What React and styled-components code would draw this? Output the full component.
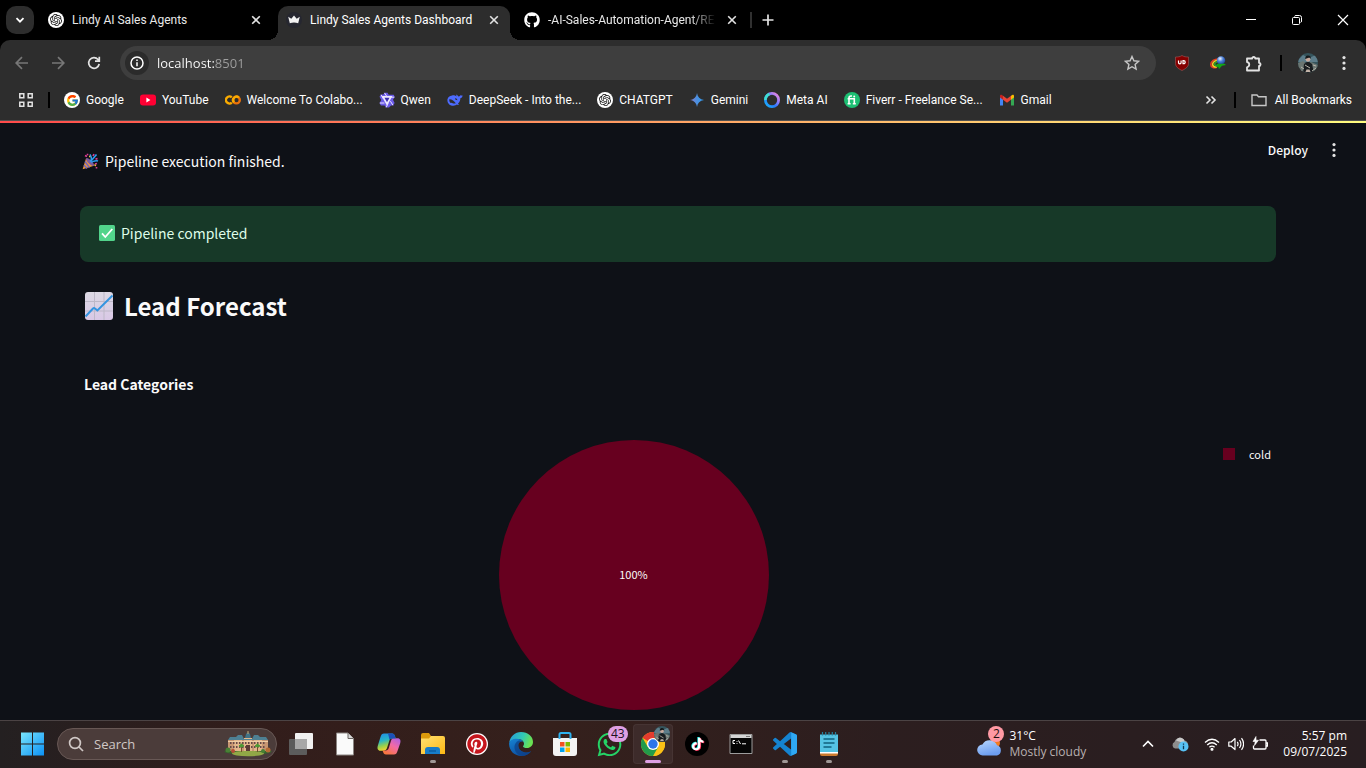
import React from "react";
import styled, { createGlobalStyle, css } from "styled-components";
import { FcGoogle } from "react-icons/fc";
import { FaGithub, FaTiktok, FaWhatsapp, FaPinterest } from "react-icons/fa";
import { SiOpenai } from "react-icons/si";

const uiFont = '"Open Sans", "Noto Sans", sans-serif';
const chromeFont = 'Roboto, "Open Sans", sans-serif';
const pageFont = '"Noto Sans CJK SC", "Noto Sans", sans-serif';

const GlobalStyle = createGlobalStyle`
  *, *::before, *::after { box-sizing: border-box; }
  body { margin: 0; background: #0e1117; }
  button, input { font: inherit; color: inherit; border: 0; padding: 0; margin: 0; background: none; }
  button { cursor: pointer; }
  svg { display: block; flex: none; }
`;

const Desktop = styled.div`
  display: flex;
  flex-direction: column;
  height: 100vh;
  overflow: hidden;
  font-family: ${uiFont};
  font-size: 12px;
  line-height: 16px;
  color: #fff;
`;

/* ---------- Browser chrome ---------- */

const TabStrip = styled.header`
  display: flex;
  align-items: flex-start;
  height: 40px;
  padding: 6px 0 0 6px;
  background: #000;
`;

const TabSearch = styled.button`
  display: grid;
  place-items: center;
  width: 28px;
  height: 28px;
  margin-right: 6px;
  border-radius: 10px;
  background: #2d2d2d;
`;

const Tabs = styled.nav`
  display: flex;
  gap: 6px;
  font-family: ${chromeFont};
`;

const Tab = styled.div`
  position: relative;
  display: flex;
  align-items: center;
  gap: 8px;
  width: 232px;
  height: 34px;
  padding: 0 8px 6px;
  color: #e8e8e8;
  ${(p) =>
    p.$active &&
    css`
      background: #2d2d2d;
      border-radius: 10px 10px 0 0;
      color: #fff;
      &::before,
      &::after {
        content: "";
        position: absolute;
        bottom: 0;
        width: 10px;
        height: 10px;
      }
      &::before {
        right: 100%;
        background: radial-gradient(circle at 0 0, transparent 10px, #2d2d2d 10px);
      }
      &::after {
        left: 100%;
        background: radial-gradient(circle at 100% 0, transparent 10px, #2d2d2d 10px);
      }
    `}
`;

const TabTitle = styled.button`
  flex: 1;
  min-width: 0;
  overflow: hidden;
  white-space: nowrap;
  text-align: left;
  ${(p) =>
    p.$fade &&
    css`
      mask-image: linear-gradient(to right, #000 calc(100% - 26px), transparent);
    `}
`;

const IconButton = styled.button`
  display: grid;
  place-items: center;
  flex: none;
  width: ${(p) => p.$w || 16}px;
  height: ${(p) => p.$h || 16}px;
  color: ${(p) => p.$color || "#e3e3e3"};
`;

const NewTab = styled.div`
  display: flex;
  align-items: center;
  gap: 8px;
  height: 28px;
  margin-left: 2px;
`;

const Divider = styled.span`
  flex: none;
  width: 2px;
  height: 16px;
  background: ${(p) => p.$color || "#000"};
`;

const DividerCell = styled.span`
  display: flex;
  justify-content: center;
  flex: none;
  width: ${(p) => p.$w}px;
`;

const WindowControls = styled.div`
  display: flex;
  margin-left: auto;
`;

const TopCorners = styled.div`
  background: #000;
`;

const Chrome = styled.div`
  background: #2d2d2d;
  border-radius: 10px 10px 0 0;
  border-bottom: 1px solid #505050;
`;

const Toolbar = styled.div`
  display: flex;
  align-items: center;
  height: 46px;
  padding: 0 4px;
`;

const AddressBar = styled.label`
  display: flex;
  align-items: center;
  flex: 1;
  height: 34px;
  margin: 0 8px;
  padding: 0 16px 0 5px;
  border-radius: 17px;
  background: #3e3e3e;
`;

const SiteInfo = styled.span`
  display: grid;
  place-items: center;
  width: 24px;
  height: 24px;
  margin-right: 8px;
  border-radius: 50%;
  background: #2b2b2b;
`;

const AddressInput = styled.input`
  flex: 1;
  min-width: 0;
  font-size: 13px;
  outline: none;
  background: linear-gradient(to right, #fff 58px, #a0a0a0 58px);
  background-clip: text;
  -webkit-text-fill-color: transparent;
`;

const Extensions = styled.div`
  display: flex;
  align-items: center;
`;

const Bookmarks = styled.nav`
  display: flex;
  align-items: center;
  height: 34px;
  padding: 0 14px 6px 18px;
  font-family: ${chromeFont};
`;

const BookmarkList = styled.div`
  display: flex;
  gap: 16px;
  flex: 1;
`;

const Bookmark = styled.a`
  display: flex;
  align-items: center;
  gap: ${(p) => p.$gap || 6}px;
  color: #fff;
  text-decoration: none;
  white-space: nowrap;
`;

const RoundLogo = styled.span`
  display: grid;
  place-items: center;
  flex: none;
  width: ${(p) => p.$size || 16}px;
  height: ${(p) => p.$size || 16}px;
  border-radius: 50%;
  background: ${(p) => p.$bg};
  color: ${(p) => p.$color};
`;

/* ---------- Dashboard page ---------- */

const Decoration = styled.div`
  flex: none;
  height: 2px;
  background: linear-gradient(to right, #ff4b4b, #fffd80);
`;

const Page = styled.main`
  position: relative;
  flex: 1;
  min-height: 0;
  overflow: hidden;
  padding: 25px 90px 0 80px;
  background: #0e1117;
  font-family: ${pageFont};
  color: #fafafa;
`;

const PageActions = styled.div`
  position: absolute;
  top: 16px;
  right: 24px;
  display: flex;
  align-items: center;
  gap: 18px;
  font-size: 12px;
  font-weight: 500;
  line-height: 22px;
`;

const StatusLine = styled.p`
  display: flex;
  align-items: center;
  gap: 6px;
  margin: 0;
  padding-left: 2px;
  font-size: 14px;
  line-height: 26px;
`;

const Alert = styled.div`
  display: flex;
  align-items: center;
  gap: 6px;
  margin-top: 32px;
  padding: 15px 19px 17px;
  border-radius: 8px;
  background: #173928;
  color: #dffde9;
  font-size: 14px;
  line-height: 24px;
`;

const Heading = styled.h2`
  display: flex;
  align-items: center;
  gap: 10px;
  margin: 28px 0 0;
  padding-left: 4px;
  font-size: 24px;
  font-weight: 700;
  line-height: 32px;
`;

const Chart = styled.figure`
  margin: 50px 0 0;
`;

const ChartTitle = styled.figcaption`
  padding-left: 4px;
  font-size: 14px;
  font-weight: 700;
  line-height: 24px;
`;

const ChartBody = styled.div`
  display: grid;
  grid-template-columns: 1fr 89px;
  margin-top: 44px;
`;

const Pie = styled.div`
  display: grid;
  place-items: center;
  justify-self: center;
  width: 270px;
  height: 270px;
  padding-bottom: 2px;
  border-radius: 50%;
  background: #67001f;
  font-size: 11px;
`;

const Legend = styled.div`
  display: flex;
  align-items: center;
  align-self: start;
  gap: 14px;
  padding: 6px 0 0 36px;
  font-size: 11px;
`;

const Swatch = styled.span`
  width: 12px;
  height: 12px;
  background: #67001f;
`;

/* ---------- Taskbar ---------- */

const Taskbar = styled.footer`
  display: flex;
  align-items: center;
  flex: none;
  height: 48px;
  padding: 0 19px 1px 10px;
  border-top: 1px solid #4b4344;
  background: linear-gradient(to right, #242021, #321d1b 18%, #35201c 40%, #2c1e1f 65%, #281e21);
`;

const TaskButton = styled.button`
  position: relative;
  display: grid;
  place-items: center;
  flex: none;
  width: 40px;
  height: 40px;
  margin: 0 2px;
  border-radius: 4px;
  ${(p) =>
    p.$active &&
    css`
      background: #3d2b2a;
      box-shadow: inset 0 0 0 1px #463433;
    `}
  ${(p) =>
    (p.$running || p.$active) &&
    css`
      &::after {
        content: "";
        position: absolute;
        bottom: 1px;
        left: 50%;
        width: ${p.$active ? 16 : 6}px;
        height: 3px;
        border-radius: 2px;
        background: ${p.$active ? "#dfa0e4" : "#a09896"};
        transform: translateX(-50%);
      }
    `}
`;

const SearchBox = styled.label`
  display: flex;
  align-items: center;
  flex: none;
  width: 220px;
  height: 32px;
  margin: 0 2px 0 3px;
  padding: 0 4px 0 10px;
  border: 1px solid #685855;
  border-radius: 16px;
  background: #4b3c3a;
  font-size: 13px;
  color: #d0c8c6;
`;

const SearchInput = styled.input`
  flex: 1;
  min-width: 0;
  margin-left: 10px;
  outline: none;
  &::placeholder {
    color: #d0c8c6;
    opacity: 1;
  }
`;

const Badge = styled.span`
  position: absolute;
  top: 2px;
  left: 19px;
  padding: 0 3px;
  border-radius: 8px;
  background: #dfa0e4;
  color: #201020;
  line-height: 16px;
`;

const AvatarBadge = styled.span`
  position: absolute;
  top: 2px;
  right: 3px;
`;

const Weather = styled.button`
  display: flex;
  align-items: center;
  gap: 6px;
  margin-left: auto;
  text-align: left;
`;

const WeatherArt = styled.span`
  position: relative;
  padding-top: 6px;
`;

const WeatherBadge = styled.span`
  position: absolute;
  top: -5px;
  right: -1px;
  width: 16px;
  border-radius: 50%;
  background: #ff99a4;
  color: #201010;
  text-align: center;
`;

const Muted = styled.span`
  display: block;
  color: #b8b0b0;
`;

const Tray = styled.div`
  display: flex;
  align-items: center;
  gap: 8px;
  margin-left: 50px;
`;

const SystemIcons = styled.div`
  display: flex;
  gap: 8px;
  margin-left: 4px;
`;

const Clock = styled.time`
  margin-left: 15px;
  text-align: right;
`;

const Line = styled.span`
  display: block;
`;

/* ---------- Icons ---------- */

const Stroke = ({ size = 16, w = 1.6, vb = 16, children }) => (
  <svg width={size} height={size} viewBox={`0 0 ${vb} ${vb}`} fill="none" stroke="currentColor" strokeWidth={w}>
    {children}
  </svg>
);

const CloseIcon = () => (
  <Stroke size={10} vb={10} w={1.6}><path d="M1.2 1.2l7.6 7.6M8.8 1.2L1.2 8.8" /></Stroke>
);

const Dots = () => (
  <svg width="4" height="16" viewBox="0 0 4 16" fill="currentColor">
    <circle cx="2" cy="2.6" r="1.6" /><circle cx="2" cy="8" r="1.6" /><circle cx="2" cy="13.4" r="1.6" />
  </svg>
);

const CrownIcon = () => (
  <svg width="16" height="16" viewBox="0 0 16 16">
    <circle cx="8" cy="8" r="8" fill="#262730" />
    <path d="M2.2 4.8l3.1 2L8 3.6l2.7 3.2 3.1-2-1.6 6.4q-4.2-1.2-8.4 0z" fill="#f2f2f2" />
  </svg>
);

const OpenAi = () => (
  <RoundLogo $bg="#fff" $color="#111"><SiOpenai size={12} /></RoundLogo>
);

const ColabIcon = () => (
  <svg width="16" height="16" viewBox="0 0 16 16" fill="none" strokeWidth="2.4">
    <path d="M6.8 5.4a3.5 3.5 0 1 0 0 5.2" stroke="#f9ab00" />
    <circle cx="11.4" cy="8" r="3.400" stroke="#e8710a" />
    <path d="M9 10.400a3.400 3.400 0 0 1 4.800-4.800" stroke="#f9ab00" />
  </svg>
);

const QwenIcon = () => (
  <svg width="16" height="16" viewBox="0 0 16 16">
    <path d="M5.500.7h3l1.200 2h5l1 2.400-1.700 2.600 1.600 3.400-1.500 2.300H12l-2 2.100H7l-1.400-2H1.900L.5 11l1.800-2.900L.5 4.800 2 2.600h2.500z" fill="#6b5be8" />
    <path d="M4 4.800h8L8 12z" fill="#3b2fb0" stroke="#eeeaff" strokeWidth="1.700" />
    <path d="M5.500.9l2.600 4M15.300 5.200h-4.600M13.900 13.200l-2.500-4M7.200 15.300l2-4M.8 11h4.600M2.100 2.800l2.200 4" stroke="#e6e1ff" />
  </svg>
);

const DeepSeekIcon = () => (
  <svg width="16" height="16" viewBox="0 0 16 16">
    <path d="M15.600 3.400c-.9.4-1.400.1-1.900-.4-.3 1-1.100 1.500-2.200 1.400-.5-.6-1.300-1-2-1.800-.5.7-.2 1.300.2 1.800-1.300-.6-2.600-1.200-4.500-1C2.400 3.600.3 5.800.4 8.400.6 11.700 3.500 14 6.500 13.800c1.500-.1 2.400-.5 3.300-1.200.8.4 1.700.5 2.300 0-.6-.3-.9-.7-1.100-1.200C13 9.700 13.400 7.700 13.300 6.200c1.400-.4 2.200-1.300 2.300-2.800z" fill="#4d6bfe" />
    <path d="M2.300 7.200c2.400-.2 5 1.700 6.500 4-2.200 1.300-3.900-1.100-5.100-.2-1.200-1-1.600-2.300-1.400-3.800zM8 6.300c1.200-.4 2.200.5 2.400 1.900L8.500 7.700" fill="#2d2d2d" />
  </svg>
);

const YouTubeIcon = () => (
  <svg width="16" height="16" viewBox="0 0 16 16">
    <rect y="2.400" width="16" height="11.200" rx="3" fill="#ff0033" /><path d="M6.400 5.600v4.800l4-2.400z" fill="#fff" />
  </svg>
);

const GeminiIcon = () => (
  <svg width="16" height="16" viewBox="0 0 16 16">
    <defs><linearGradient id="gem" x1="0" x2="1"><stop stopColor="#8b7bc8" /><stop offset=".5" stopColor="#4a8fe0" /><stop offset="1" stopColor="#2f9cf0" /></linearGradient></defs>
    <path d="M8 1c.6 4 2.800 6.300 7 7-4.200.7-6.400 3-7 7-.6-4-2.800-6.300-7-7 4.200-.7 6.400-3 7-7z" fill="url(#gem)" />
  </svg>
);

const MetaIcon = () => (
  <svg width="16" height="16" viewBox="0 0 16 16" fill="none">
    <defs><linearGradient id="meta" x1="0" y1="1" x2="1" y2="0"><stop stopColor="#18b8f8" /><stop offset=".4" stopColor="#2a78ff" /><stop offset=".65" stopColor="#8a7bff" /><stop offset="1" stopColor="#ff8ad8" /></linearGradient></defs>
    <circle cx="8" cy="8" r="6.600" stroke="url(#meta)" strokeWidth="2.800" />
    <path d="M1.400 8a6.600 6.600 0 0 1 4-6" stroke="#3fe0d0" strokeWidth="2.600" />
  </svg>
);

const FiverrIcon = () => (
  <svg width="16" height="16" viewBox="0 0 16 16" fill="none">
    <circle cx="8" cy="8" r="8" fill="#1dbf73" />
    <path d="M5 12V5.800Q5 4 7 4h1M3.600 6.800h6.700V12M3.600 11.800h3M8.800 11.800h3" stroke="#fff" strokeWidth="1.600" />
    <circle cx="10.200" cy="4.400" r="1" fill="#fff" />
  </svg>
);

const GmailIcon = () => (
  <svg width="16" height="16" viewBox="0 0 16 16">
    <path d="M1 4v9.500h3V6.500z" fill="#4285f4" /><path d="M12 6.500v7h3V4z" fill="#34a853" />
    <path d="M12 3.800l1.200-.8C14.200 2.300 15 3 15 4v1.400l-3 2.300z" fill="#fbbc04" />
    <path d="M1 5.400V4c0-1 1-1.700 1.900-1L4 3.800v3.900z" fill="#c5221f" /><path d="M4 3.800l4 3 4-3v3.900l-4 3-4-3z" fill="#ea4335" />
  </svg>
);

const UBlockIcon = () => (
  <svg width="16" height="16" viewBox="0 0 16 16">
    <path d="M8 .5c2 1.300 4 1.500 6.500 1.500v6.500c0 3-2.500 5-6.500 7-4-2-6.500-4-6.500-7V2C4 2 6 1.800 8 .5z" fill="#850000" stroke="#a35b5b" strokeWidth=".6" />
    <path d="M4.500 5.400v2.200a1.300 1.300 0 0 0 2.600 0V5.400M9 5.700h.7a1.500 1.500 0 0 1 0 3H9z" fill="none" stroke="#fff" strokeWidth="1.200" />
  </svg>
);

const DownloadManagerIcon = () => (
  <svg width="16" height="16" viewBox="0 0 16 16">
    <defs><radialGradient id="globe" cx=".4" cy=".3" r=".7"><stop stopColor="#eef6ff" /><stop offset=".5" stopColor="#4c80d8" /><stop offset="1" stopColor="#1b3f9a" /></radialGradient></defs>
    <path d="M9 4C4.500 3.500.8 6.500.8 9.500c0 2.500 2.700 3.700 5.700 3" fill="none" stroke="#e33b25" strokeWidth="1.600" />
    <path d="M9 5.300C5.500 5 2.600 7.200 2.600 9.300c0 2 2 3 4.400 2.400" fill="none" stroke="#f6cf21" strokeWidth="1.600" />
    <path d="M9 6.500C6.500 6.500 4.500 8 4.600 9.300c.1 1.200 1.400 1.700 3.400 1.400" fill="none" stroke="#2ba12b" strokeWidth="1.600" />
    <circle cx="11" cy="5.400" r="4.200" fill="url(#globe)" />
    <path d="M7 8.700h7.500L16 10l-4 .8-3 3.200L8.300 12l-2.800-.5z" fill="#14a514" />
  </svg>
);

const PuzzleIcon = () => (
  <Stroke size={18} vb={18} w={1.8}>
    <path d="M2 3.500h5.200V2.800q1.500-1.600 3 0v.7H14v4.300h.7q1.600 1.600 0 3.200H14v4.500H2v-3.200c3-.8 3-4.600 0-5.300z" strokeLinejoin="round" />
  </Stroke>
);

const Avatar = ({ size = 20 }) => (
  <svg width={size} height={size} viewBox="0 0 20 20">
    <defs><clipPath id={`av${size}`}><circle cx="10" cy="10" r="10" /></clipPath></defs>
    <g clipPath={`url(#av${size})`}>
      <rect width="20" height="20" fill="#35545c" />
      <path d="M0 7L5 2l6 3 9-4v8H0z" fill="#5d7d8a" /><path d="M0 10l5-2 4 3 4-2 7 3v8H0z" fill="#6b7672" />
      <path d="M5 20l1-9 3-2h2l3 2 2 9z" fill="#191d20" />
      <path d="M7 12l5 3M3 14l3 2M14 18l4-3M1 17l3 1M15 12l3 1" stroke="#b7b5aa" />
      <circle cx="10" cy="6.300" r="2.400" fill="#c9a99c" /><path d="M7.200 6q0-3.500 2.800-3.400 3 0 2.800 3.200l-1.500-1.200z" fill="#15191b" />
      <path d="M8.500 16.500h3l1 2.500h-5z" fill="#c4b4a8" />
    </g>
  </svg>
);

const PartyEmoji = () => (
  <svg width="17" height="17" viewBox="0 0 17 17" fill="none">
    <path d="M.6 16.200L4 5.500q5 1.800 8 7.300z" fill="#e9973c" />
    <path d="M3 8.500l4.500 6M2 12l3 3.500" stroke="#7567bb" strokeWidth="1.500" />
    <ellipse cx="8" cy="9" rx="1.800" ry="5.200" transform="rotate(-45 8 9)" fill="#7b5a9e" />
    <path d="M8 8.500C10 7 9.500 4 8 1.300M9 9c2 .5 3.500-2.500 7-1" stroke="#2d9bf0" strokeWidth="1.500" />
    <path d="M9 8l5.500-6.500" stroke="#2d9bf0" strokeWidth="1.700" />
    <path d="M3 2.500l2 1M12 1l-1 2M15.500 5.500l-2 .8M15 10.500l-2 .6M5.500.8v1.400M14.500 14v1.500" stroke="#dd3d90" strokeWidth="1.600" />
    <path d="M7 3.500h1.400M12.500 11.500l1.300 1.400" stroke="#f5be3c" strokeWidth="1.400" />
  </svg>
);

const CheckEmoji = () => (
  <svg width="16" height="16" viewBox="0 0 16 16">
    <rect width="16" height="16" rx="1.500" fill="#52d48b" /><path d="M3 8.300L6.300 12 13.300 4" fill="none" stroke="#fff" strokeWidth="1.800" />
  </svg>
);

const ChartEmoji = () => (
  <svg width="30" height="28" viewBox="0 0 30 28">
    <defs><linearGradient id="paper" x2="0" y2="1"><stop stopColor="#dcd9e4" /><stop offset="1" stopColor="#d9c8e6" /></linearGradient></defs>
    <rect x="1" width="28" height="28" rx="3" fill="url(#paper)" />
    <path d="M10.500 0v28M20 0v28M1 9.500h28M1 19h28" stroke="#bdb8c8" />
    <path d="M1.500 24.500l7.500-8q1-.9 2 0l2.400 2L28.500 3.500" fill="none" stroke="#3494e0" strokeWidth="2" />
  </svg>
);

const WindowsIcon = () => (
  <svg width="24" height="24" viewBox="0 0 24 24">
    <defs><linearGradient id="win" gradientUnits="userSpaceOnUse" x1="0" y1="0" x2="24" y2="24"><stop stopColor="#7ce8fc" /><stop offset="1" stopColor="#0a90f5" /></linearGradient></defs>
    <path d="M1 .5h11v11H1zM13 .5h11v11H13zM1 12.500h11v11H1zM13 12.500h11v11H13z" fill="url(#win)" />
  </svg>
);

const PalaceArt = () => (
  <svg width="48" height="26" viewBox="0 0 48 26">
    <ellipse cx="24" cy="20.500" rx="23.500" ry="3.300" fill="#36642d" /><ellipse cx="24" cy="22.500" rx="16" ry="2.800" fill="#91a846" />
    <path d="M4 9h40v11H4z" fill="#c79672" /><path d="M10 8h8v12h-8zM30 8h8v12h-8zM20 7h8v13h-8z" fill="#e2b78c" />
    <path d="M4 9l2-3h6l2-2h4l2 4h8l2-4h4l2 2h6l2 3z" fill="#4e8093" />
    <path d="M21 7l1-4 2-2 2 2 1 4z" fill="#417387" /><path d="M24 0v3" stroke="#c9a66d" />
    <path d="M6 12h36M6 16h36" stroke="#674b48" strokeWidth="2" strokeDasharray="1.500 1.500" />
    <path d="M22 14h4v6h-4z" fill="#5c3b35" /><path d="M4 10.500h40" stroke="#efcea5" />
    <path d="M17.500 13v8M33.500 13v8" stroke="#72502d" /><path d="M15 15l2.500-2 2.500 2-2.500 1zM31 15l2.500-2 2.500 2-2.500 1z" fill="#4d9b35" stroke="#4d9b35" />
    <circle cx="4" cy="19" r="2.500" fill="#498135" /><circle cx="44" cy="19" r="2.500" fill="#b56c35" /><circle cx="9" cy="20" r="2" fill="#b54e36" /><circle cx="39" cy="20" r="2" fill="#498135" />
  </svg>
);

const TaskViewIcon = () => (
  <svg width="24" height="24" viewBox="0 0 24 24">
    <rect x="6" y="1" width="18" height="16" rx="1" fill="#f1f1f1" /><rect y="7" width="18" height="16" rx="1" fill="#5c5c5c" /><path d="M6 7h12v10H6z" fill="#a8a8a8" />
  </svg>
);

const FileIcon = () => (
  <svg width="18" height="24" viewBox="0 0 18 24"><path d="M.5 1H12l5.500 5.500V23H.5z" fill="#fafafa" stroke="#8b8582" /><path d="M12 1v5.500h5.500" fill="#d8d8d8" stroke="#6b6663" /></svg>
);

const CopilotIcon = () => (
  <svg width="24" height="24" viewBox="0 0 24 24">
    <defs>
      <linearGradient id="cp1" x2=".3" y2="1"><stop stopColor="#2189e8" /><stop offset=".45" stopColor="#27b5c8" /><stop offset=".75" stopColor="#9ad04b" /><stop offset="1" stopColor="#f4d331" /></linearGradient>
      <linearGradient id="cp2" x1="1" x2=".3" y2="1"><stop stopColor="#a55ee8" /><stop offset=".5" stopColor="#f26aa6" /><stop offset="1" stopColor="#f9763f" /></linearGradient>
    </defs>
    <path d="M7 1.500h8c1.800 0 2.500 1.300 3 2.800l.7 2.200H15c-1.500 0-2.200.8-2.700 2.200L10 16c-.7 2-1.700 2.700-3.500 2.700H3.500C.7 18.700 0 16.300.8 13.700L3.500 5c.7-2.400 1.700-3.500 3.500-3.500z" fill="url(#cp1)" />
    <path d="M17 22.500H9c-1.800 0-2.500-1.300-3-2.800l-.4-1.300h3.200c1.700 0 2.500-.9 3-2.400L14 8.800c.6-1.900 1.500-2.500 3.200-2.500h3.300c2.800 0 3.500 2.400 2.700 5L20.500 19c-.7 2.400-1.700 3.500-3.500 3.500z" fill="url(#cp2)" />
    <path d="M11 1.500h4c1.800 0 2.500 1.300 3 2.800l.7 2.200H15c-1 0-2 .5-2.400 1.500z" fill="#1c50b8" />
  </svg>
);

const FolderApp = () => (
  <svg width="24" height="24" viewBox="0 0 24 24">
    <defs><linearGradient id="fold" x2="1" y2="1"><stop stopColor="#ffe174" /><stop offset="1" stopColor="#fdb813" /></linearGradient></defs>
    <path d="M0 3q0-2 2-2h6l2 3v4H0z" fill="#dc9a0c" /><path d="M0 6.500h8l2-2.500h12q2 0 2 2v16H0z" fill="url(#fold)" />
    <path d="M4 22v-4q0-3 3-3h9q3 0 3 3v4z" fill="#177cc8" /><path d="M8 19h7" stroke="#0b5ca0" strokeWidth="1.500" />
  </svg>
);

const EdgeIcon = () => (
  <svg width="24" height="24" viewBox="0 0 24 24">
    <defs>
      <linearGradient id="ed1" x2="1" y2=".3"><stop stopColor="#2598dc" /><stop offset=".6" stopColor="#31c9b5" /><stop offset="1" stopColor="#6ae153" /></linearGradient>
      <linearGradient id="ed2" x2=".5" y2="1"><stop stopColor="#1684d3" /><stop offset="1" stopColor="#0d4fa0" /></linearGradient>
    </defs>
    <path d="M.3 10.500C1.200 4.500 6 0 12 0c7 0 12 4.500 12 10 0 3.500-2.700 6-6 6-2.500 0-4-.8-4-1.600 0-.7 1-1 1-2.700 0-2.500-2.400-4.800-6-4.800C5 6.900 1.800 8.500.3 10.500z" fill="url(#ed1)" />
    <path d="M.1 12C0 8.500 4 6.800 7.600 6.800c3 0 5.500 1.300 6.700 3-1-.7-5-.6-5 3.700 0 4.500 4.300 7 8.500 7 2 0 3.500-.8 4.200-1.200C20 22.500 16 24 12.500 24 5.500 24 .2 19 .1 12z" fill="url(#ed2)" />
    <path d="M10 8.500c-3.500 1.400-5 4.500-4.400 8 .6 3.800 3.800 7 7.400 7.400 4 .2 7.700-2 9-4.600-1.500.9-3 1.200-4.700 1.200-4.500 0-8-3.300-8-7 0-2.200 1.300-3.800 3.500-4.200-.8-.6-1.800-.9-2.800-.8z" fill="#0d3f84" opacity=".7" />
  </svg>
);

const StoreIcon = () => (
  <svg width="24" height="24" viewBox="0 0 24 24">
    <path d="M0 6h24v15q0 3-3 3H3q-3 0-3-3z" fill="#f3f3f3" /><path d="M6.500 7V2.500Q6.500 1 8 1h8q1.500 0 1.500 1.500V7" fill="none" stroke="#2db2f0" strokeWidth="2" />
    <path d="M7 10h4.500v4.500H7z" fill="#f25022" /><path d="M12.500 10H17v4.500h-4.500z" fill="#7fba00" /><path d="M7 15.500h4.500V20H7z" fill="#00a4ef" /><path d="M12.500 15.500H17V20h-4.500z" fill="#ffb900" />
  </svg>
);

const ChromeIcon = () => (
  <svg width="24" height="24" viewBox="0 0 24 24">
    <circle cx="12" cy="12" r="12" fill="#fbc116" />
    <path d="M12 12L1.600 6A12 12 0 0 1 22.400 6z" fill="#e33b2e" /><path d="M12 6h10.400a12 12 0 0 1-10.400 18l5.200-9z" fill="#fbc116" />
    <path d="M1.600 6A12 12 0 0 0 12 24l5.200-9-10.400 0z" fill="#229b4a" />
    <circle cx="12" cy="12" r="6" fill="#fff" /><circle cx="12" cy="12" r="4.700" fill="#2a75ea" />
  </svg>
);

const TikTokIcon = () => (
  <svg width="24" height="24" viewBox="0 0 24 24">
    <circle cx="12" cy="12" r="12" fill="#000" />
    <g transform="translate(5.500 5)"><FaTiktok size={13} color="#25f4ee" /></g>
    <g transform="translate(7 6)"><FaTiktok size={13} color="#fe2c55" /></g>
    <g transform="translate(6.200 5.500)"><FaTiktok size={13} color="#fff" /></g>
  </svg>
);

const TerminalIcon = () => (
  <svg width="24" height="20" viewBox="0 0 24 20">
    <path d="M1 .5h22v19H1z" fill="#050505" stroke="#9c9c9c" /><path d="M1.500 1h21v3h-21z" fill="#d4d4d4" />
    <path d="M17 2.500h4" stroke="#777" /><path d="M6 6.500H4v3h2M8 7v.8M8 9v.8M9.500 6.500l2 3.500M13 9.800h4" fill="none" stroke="#fff" />
  </svg>
);

const VsCodeIcon = () => (
  <svg width="24" height="24" viewBox="0 0 24 24">
    <path d="M23.150 2.587L18.210.210a1.494 1.494 0 0 0-1.705.290l-9.460 8.630-4.120-3.128a.999.999 0 0 0-1.276.057L.327 7.261A1 1 0 0 0 .326 8.740L3.899 12 .326 15.260a1 1 0 0 0 .001 1.479L1.650 17.940a.999.999 0 0 0 1.276.057l4.120-3.128 9.460 8.630a1.492 1.492 0 0 0 1.704.290l4.942-2.377A1.500 1.500 0 0 0 24 20.060V3.939a1.500 1.500 0 0 0-.850-1.352zm-5.146 14.861L10.826 12l7.178-5.448v10.896z" fill="#1583d0" />
    <path d="M18.200.200l4.950 2.387q.85.400.85 1.352V20.060q0 .950-.850 1.352L18.200 23.800z" fill="#2fa8f3" />
  </svg>
);

const NotepadIcon = () => (
  <svg width="20" height="24" viewBox="0 0 20 24">
    <path d="M1 3h18v19q0 2-2 2H3q-2 0-2-2z" fill="#cb7a2f" /><path d="M1 19h18v2.500H1z" fill="#fff" /><path d="M1 2.500h18V20H1z" fill="#55c3e3" />
    <path d="M3.500 0v3.500M6.700 0v3.500M10 0v3.500M13.300 0v3.500M16.500 0v3.500" stroke="#25829e" strokeWidth="1.200" />
    <path d="M4.500 7h11M4.500 11h11M4.500 15h8" stroke="#11617d" strokeWidth="1.700" />
  </svg>
);

const CloudIcon = () => (
  <svg width="26" height="20" viewBox="0 0 26 20">
    <defs><linearGradient id="cloud" x2=".4" y2="1"><stop stopColor="#b9d8ff" /><stop offset="1" stopColor="#6c9df0" /></linearGradient></defs>
    <circle cx="18" cy="6" r="5" fill="#f37b21" /><path d="M6 18.500a5.500 5.500 0 0 1-.6-11A8 8 0 0 1 20 8.300a5.300 5.300 0 0 1 0 10.200z" fill="url(#cloud)" />
  </svg>
);

const OneDriveIcon = () => (
  <svg width="18" height="16" viewBox="0 0 18 16">
    <path d="M4 12.500A3.500 3.500 0 0 1 3.500 6 5.500 5.500 0 0 1 13.500 4.500Q17 5 17 9v3.500z" fill="#8d8d8d" /><path d="M5 4.500Q8-1 13 3.500l1 4z" fill="#c9c9c9" />
    <circle cx="12.500" cy="10.500" r="5" fill="#58c2f5" /><path d="M12.500 9.800v3.400M12.500 7.500v1.300" stroke="#0d3954" strokeWidth="1.300" />
  </svg>
);

const WifiIcon = () => (
  <Stroke w={1.3}><path d="M1 6.500q7-6.500 14 0M3.200 9q4.800-4.400 9.600 0M5.400 11.300q2.600-2.400 5.200 0" /><circle cx="8" cy="13.200" r=".9" fill="currentColor" /></Stroke>
);
const SoundIcon = () => (
  <Stroke w={1.2}><path d="M.8 6v4.200h2.400L7 13.500v-11L3.200 6zM9.300 5.800q1.500 2.200 0 4.400M11.500 4q2.800 4 0 8M13.500 2.200q4.200 5.800 0 11.600" strokeLinejoin="round" /></Stroke>
);
const BatteryIcon = () => (
  <Stroke w={1.3}><path d="M7.500 4H13q1 0 1 1v7q0 1-1 1H2.500q-1 0-1-1V9.500M14.500 7h1v3h-1" /><path d="M4 .5L1 5.500h2.200L2.500 9.500l4-5.300H4z" fill="currentColor" strokeWidth=".6" /></Stroke>
);

/* ---------- Data ---------- */

const tabs = [
  { title: "Lindy AI Sales Agents", icon: <OpenAi /> },
  { title: "Lindy Sales Agents Dashboard", icon: <CrownIcon />, active: true },
  { title: "-AI-Sales-Automation-Agent/RE", icon: <FaGithub size={16} color="#fff" />, fade: true },
];

const bookmarks = [
  ["Google", <RoundLogo $bg="#fff"><FcGoogle size={13} /></RoundLogo>],
  ["YouTube", <YouTubeIcon />],
  ["Welcome To Colabo...", <ColabIcon />],
  ["Qwen", <QwenIcon />],
  ["DeepSeek - Into the...", <DeepSeekIcon />],
  ["CHATGPT", <OpenAi />],
  ["Gemini", <GeminiIcon />],
  ["Meta AI", <MetaIcon />],
  ["Fiverr - Freelance Se...", <FiverrIcon />],
  ["Gmail", <GmailIcon />],
];

const apps = [
  { name: "Task view", icon: <TaskViewIcon /> },
  { name: "Document", icon: <FileIcon /> },
  { name: "Copilot", icon: <CopilotIcon /> },
  { name: "File Explorer", icon: <FolderApp />, running: true },
  { name: "Pinterest", icon: <RoundLogo $size={22} $bg="#fff" $color="#c5161d"><FaPinterest size={20} /></RoundLogo> },
  { name: "Edge", icon: <EdgeIcon /> },
  { name: "Store", icon: <StoreIcon /> },
  { name: "WhatsApp", icon: <FaWhatsapp size={27} color="#25d366" />, badge: "43" },
  { name: "Chrome", icon: <ChromeIcon />, active: true },
  { name: "TikTok", icon: <TikTokIcon /> },
  { name: "Terminal", icon: <TerminalIcon /> },
  { name: "VS Code", icon: <VsCodeIcon />, running: true },
  { name: "Notepad", icon: <NotepadIcon />, running: true },
];

export default function App() {
  return (
    <Desktop>
      <GlobalStyle />
      <TabStrip>
        <TabSearch aria-label="Search tabs"><Stroke size={10} vb={10} w={1.8}><path d="M1.500 3.200L5 6.700l3.500-3.500" /></Stroke></TabSearch>
        <Tabs>
          {tabs.map((t) => (
            <Tab key={t.title} $active={t.active}>
              {t.icon}
              <TabTitle $fade={t.fade}>{t.title}</TabTitle>
              <IconButton aria-label="Close tab"><CloseIcon /></IconButton>
            </Tab>
          ))}
        </Tabs>
        <NewTab>
          <Divider $color="#303030" />
          <IconButton aria-label="New tab"><Stroke size={12} vb={12} w={1.7}><path d="M6 .5v11M.5 6h11" /></Stroke></IconButton>
        </NewTab>
        <WindowControls>
          <IconButton $w={46} $h={28} $color="#fff" aria-label="Minimize"><Stroke size={10} vb={10} w={1}><path d="M0 4.500h10" /></Stroke></IconButton>
          <IconButton $w={46} $h={28} $color="#fff" aria-label="Restore"><Stroke size={10} vb={10} w={1}><rect x=".5" y="2.500" width="7" height="7" rx="1" /><path d="M2.500 1.500Q2.700.5 4 .5h3.500q2 0 2 2V6q0 1.300-1 1.500" /></Stroke></IconButton>
          <IconButton $w={46} $h={28} $color="#fff" aria-label="Close"><Stroke size={12} vb={12} w={1.2}><path d="M1 1l10 10M11 1L1 11" /></Stroke></IconButton>
        </WindowControls>
      </TabStrip>

      <TopCorners>
        <Chrome>
          <Toolbar>
            <IconButton $w={36} $color="#777" aria-label="Back"><Stroke w={1.7}><path d="M14 8H2.500M8 2.200L2.200 8 8 13.800" /></Stroke></IconButton>
            <IconButton $w={36} $color="#777" aria-label="Forward"><Stroke w={1.7}><path d="M2 8h11.500M8 2.200L13.800 8 8 13.800" /></Stroke></IconButton>
            <IconButton $w={36} aria-label="Reload"><Stroke w={1.7}><path d="M13.200 9A5.300 5.300 0 1 1 12 4.500L13.300 6M13.300 1.800V6.200H9" /></Stroke></IconButton>
            <AddressBar>
              <SiteInfo><Stroke size={14} vb={14} w={1.5}><circle cx="7" cy="7" r="6" /><path d="M7 6.300v4M7 3.500V5" /></Stroke></SiteInfo>
              <AddressInput aria-label="Address" defaultValue="localhost:8501" />
              <Stroke w={1.4}><path d="M8 1.500l1.900 4.300 4.700.5-3.500 3.100 1 4.700L8 11.700l-4.100 2.400 1-4.700L1.400 6.300l4.700-.5z" stroke="#c7c7c7" /></Stroke>
            </AddressBar>
            <Extensions>
              <IconButton $w={36} aria-label="Ad blocker"><UBlockIcon /></IconButton>
              <IconButton $w={36} aria-label="Downloads"><DownloadManagerIcon /></IconButton>
              <IconButton $w={36} aria-label="Extensions"><PuzzleIcon /></IconButton>
              <DividerCell $w={18}><Divider /></DividerCell>
              <IconButton $w={36} $h={20} aria-label="Profile"><Avatar /></IconButton>
              <IconButton $w={36} aria-label="Menu"><Dots /></IconButton>
            </Extensions>
          </Toolbar>
          <Bookmarks>
            <IconButton aria-label="Apps"><Stroke size={14} vb={14} w={1.5}><path d="M.8.8h4v4h-4zM9.200.8h4v4h-4zM.8 9.200h4v4h-4zM9.200 9.200h4v4h-4z" /></Stroke></IconButton>
            <DividerCell $w={30}><Divider /></DividerCell>
            <BookmarkList>
              {bookmarks.map(([name, icon]) => (
                <Bookmark key={name} href="#">{icon}{name}</Bookmark>
              ))}
            </BookmarkList>
            <IconButton aria-label="More bookmarks"><Stroke size={12} vb={12} w={1.6}><path d="M1.500 2.500L5 6 1.500 9.500M6.500 2.500L10 6 6.500 9.500" /></Stroke></IconButton>
            <DividerCell $w={32}><Divider /></DividerCell>
            <Bookmark href="#" $gap={8}><Stroke w={1.4}><path d="M1 3h5l1.500 1.700H15v8.800H1z" stroke="#c7c7c7" /></Stroke>All Bookmarks</Bookmark>
          </Bookmarks>
        </Chrome>
      </TopCorners>

      <Decoration />
      <Page>
        <PageActions>
          <button>Deploy</button>
          <IconButton aria-label="Page menu"><Dots /></IconButton>
        </PageActions>
        <StatusLine><PartyEmoji />Pipeline execution finished.</StatusLine>
        <Alert role="status"><CheckEmoji />Pipeline completed</Alert>
        <Heading><ChartEmoji />Lead Forecast</Heading>
        <Chart>
          <ChartTitle>Lead Categories</ChartTitle>
          <ChartBody>
            <Pie>100%</Pie>
            <Legend><Swatch />cold</Legend>
          </ChartBody>
        </Chart>
      </Page>

      <Taskbar>
        <TaskButton aria-label="Start"><WindowsIcon /></TaskButton>
        <SearchBox>
          <Stroke w={1.7}><circle cx="7" cy="7" r="5.400" /><path d="M11 11l4 4" /></Stroke>
          <SearchInput placeholder="Search" aria-label="Search" />
          <PalaceArt />
        </SearchBox>
        {apps.map((a) => (
          <TaskButton key={a.name} aria-label={a.name} $active={a.active} $running={a.running}>
            {a.icon}
            {a.badge && <Badge>{a.badge}</Badge>}
            {a.active && <AvatarBadge><Avatar size={16} /></AvatarBadge>}
          </TaskButton>
        ))}
        <Weather>
          <WeatherArt><CloudIcon /><WeatherBadge>2</WeatherBadge></WeatherArt>
          <span>31°C<Muted>Mostly cloudy</Muted></span>
        </Weather>
        <Tray>
          <IconButton $w={24} $color="#fff" aria-label="Hidden icons"><Stroke size={12} vb={12} w={1.6}><path d="M1 8.500l5-5 5 5" /></Stroke></IconButton>
          <IconButton $w={24} aria-label="OneDrive"><OneDriveIcon /></IconButton>
          <SystemIcons>
            <WifiIcon />
            <SoundIcon />
            <BatteryIcon />
          </SystemIcons>
        </Tray>
        <Clock><Line>5:57 pm</Line><Line>09/07/2025</Line></Clock>
      </Taskbar>
    </Desktop>
  );
}
